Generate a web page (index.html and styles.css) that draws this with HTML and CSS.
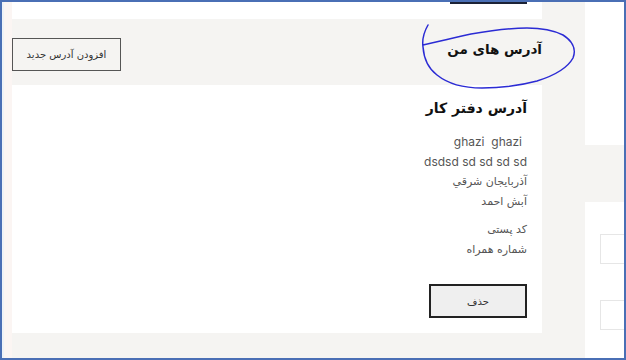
FILE: index.html
```html
<!DOCTYPE html>
<html lang="fa" dir="rtl">
<head>
    <meta charset="UTF-8">
    <meta name="viewport" content="width=device-width, initial-scale=1.0">
    <title>آدرس های من</title>
    <link rel="stylesheet" href="styles.css">
</head>
<body>
<div class="frame">
    <div class="side">
        <div class="side-card top"></div>
        <div class="side-card bottom">
            <div class="field"></div>
            <div class="field"></div>
        </div>
    </div>

    <div class="main">
        <div class="topbar">
            <div class="nav-btn"></div>
        </div>
        <div class="header">
            <h2 class="page-title">آدرس های من</h2>
            <button class="add-btn">افزودن آدرس جدید</button>
        </div>
        <div class="card">
            <h3 class="card-title">آدرس دفتر کار</h3>
            <div class="lines">
                <p class="latin indent">ghazi&nbsp; ghazi</p>
                <p class="latin">dsdsd sd sd sd sd</p>
                <p>آذربایجان شرقي</p>
                <p>آبش احمد</p>
            </div>
            <div class="lines">
                <p>کد پستی</p>
                <p>شماره همراه</p>
            </div>
            <button class="del-btn">حذف</button>
        </div>
        <div class="footer"></div>
    </div>

    <div class="strip"></div>

    <svg class="scribble" width="626" height="360" viewBox="0 0 626 360">
        <path d="M428 25 C424 32 422 40 423 47 C424 60 429 69 437 75 C447 83 462 88 482 88 C502 88 522 85 537 81 C553 76 567 69 573 58 C577 48 571 40 563 35 C553 30 539 28 527 28 C509 28 489 31 471 34 C453 38 437 42 423 45"
              fill="none" stroke="#2b2bd4" stroke-width="1.5" stroke-linecap="round"/>
    </svg>
</div>
</body>
</html>
```

FILE: styles.css
```css
* {
    box-sizing: border-box;
}
body {
    margin: 0;
    padding: 0;
    font-family: "DejaVu Sans", Inter, sans-serif;
    background-color: #ffffff;
}
.frame {
    position: relative;
    width: 626px;
    height: 360px;
    border: 2px solid #4a6fb5;
    display: flex;
    overflow: hidden;
}
.strip {
    width: 10px;
    background-color: #fbf5f3;
    border-left: 2px solid #eef2f7;
}
.main {
    width: 530px;
    display: flex;
    flex-direction: column;
    background-color: #f5f4f2;
}
.topbar {
    height: 17px;
    background-color: #fff;
    padding-right: 15px;
}
.nav-btn {
    width: 77px;
    height: 2px;
    background-color: #1b2236;
}
.header {
    height: 66px;
    display: flex;
    align-items: center;
    justify-content: space-between;
}
.page-title {
    margin: 0 0 6px 0;
    font-size: 13.5px;
    font-weight: bold;
    color: #111;
}
.add-btn {
    width: 109px;
    height: 33px;
    margin-top: 5px;
    background: transparent;
    border: 1px solid #555;
    font-family: inherit;
    font-size: 10px;
    color: #333;
    padding: 0;
}
.card {
    height: 248px;
    background-color: #fff;
    padding: 12px 15px 0 0;
}
.card-title {
    margin: 0 0 13px 0;
    font-size: 14px;
    line-height: 22px;
    font-weight: bold;
    color: #111;
}
.lines {
    margin-bottom: 8px;
}
.lines p {
    margin: 0;
    font-size: 11px;
    line-height: 20px;
    color: #555;
}
.lines p.latin {
    font-family: Inter, "DejaVu Sans", sans-serif;
    font-size: 12px;
}
.lines p.indent {
    padding-right: 5px;
}
.del-btn {
    display: block;
    margin-top: 24px;
    width: 98px;
    height: 34px;
    background-color: #efefef;
    border: 2px solid #222;
    font-family: inherit;
    font-size: 10px;
    color: #333;
    padding: 0;
}
.footer {
    flex: 1;
}
.side {
    width: 82px;
    background-color: #f5f4f2;
    display: flex;
    flex-direction: column;
}
.side-card {
    width: 39px;
    background-color: #fff;
    direction: ltr;
    overflow: hidden;
}
.side-card.top {
    height: 143px;
    flex-shrink: 0;
}
.side-card.bottom {
    margin-top: 57px;
    flex: 1;
    padding-top: 32px;
    display: flex;
    flex-direction: column;
    gap: 36px;
}
.field {
    width: 40px;
    height: 30px;
    margin-left: 15px;
    border: 1px solid #e6e6e6;
}
.scribble {
    position: absolute;
    top: -2px;
    left: -2px;
    pointer-events: none;
}
```
